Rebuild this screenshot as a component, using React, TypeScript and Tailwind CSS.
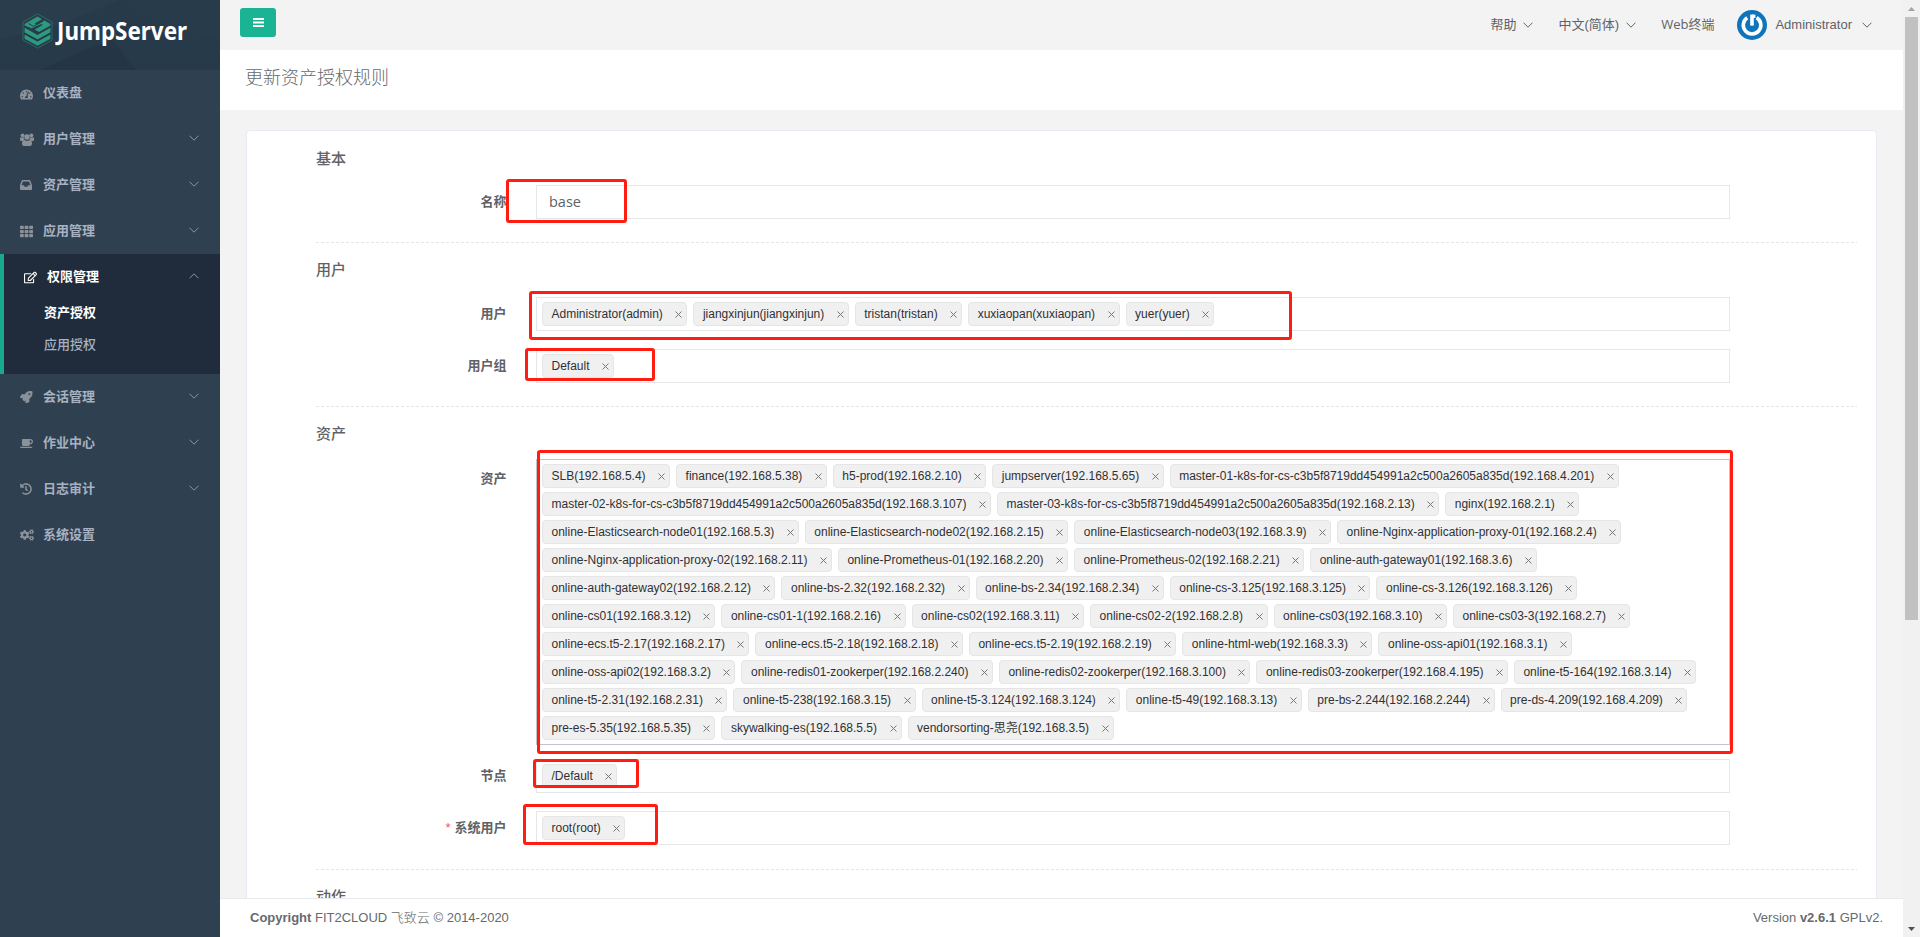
import type { ReactNode } from "react";
import { FaCoffee, FaCogs, FaHistory, FaRegEdit, FaRocket, FaTachometerAlt, FaTh } from "react-icons/fa";

const users = [
  "Administrator(admin)",
  "jiangxinjun(jiangxinjun)",
  "tristan(tristan)",
  "xuxiaopan(xuxiaopan)",
  "yuer(yuer)",
];

const assets = [
  "SLB(192.168.5.4)",
  "finance(192.168.5.38)",
  "h5-prod(192.168.2.10)",
  "jumpserver(192.168.5.65)",
  "master-01-k8s-for-cs-c3b5f8719dd454991a2c500a2605a835d(192.168.4.201)",
  "master-02-k8s-for-cs-c3b5f8719dd454991a2c500a2605a835d(192.168.3.107)",
  "master-03-k8s-for-cs-c3b5f8719dd454991a2c500a2605a835d(192.168.2.13)",
  "nginx(192.168.2.1)",
  "online-Elasticsearch-node01(192.168.5.3)",
  "online-Elasticsearch-node02(192.168.2.15)",
  "online-Elasticsearch-node03(192.168.3.9)",
  "online-Nginx-application-proxy-01(192.168.2.4)",
  "online-Nginx-application-proxy-02(192.168.2.11)",
  "online-Prometheus-01(192.168.2.20)",
  "online-Prometheus-02(192.168.2.21)",
  "online-auth-gateway01(192.168.3.6)",
  "online-auth-gateway02(192.168.2.12)",
  "online-bs-2.32(192.168.2.32)",
  "online-bs-2.34(192.168.2.34)",
  "online-cs-3.125(192.168.3.125)",
  "online-cs-3.126(192.168.3.126)",
  "online-cs01(192.168.3.12)",
  "online-cs01-1(192.168.2.16)",
  "online-cs02(192.168.3.11)",
  "online-cs02-2(192.168.2.8)",
  "online-cs03(192.168.3.10)",
  "online-cs03-3(192.168.2.7)",
  "online-ecs.t5-2.17(192.168.2.17)",
  "online-ecs.t5-2.18(192.168.2.18)",
  "online-ecs.t5-2.19(192.168.2.19)",
  "online-html-web(192.168.3.3)",
  "online-oss-api01(192.168.3.1)",
  "online-oss-api02(192.168.3.2)",
  "online-redis01-zookerper(192.168.2.240)",
  "online-redis02-zookerper(192.168.3.100)",
  "online-redis03-zookerper(192.168.4.195)",
  "online-t5-164(192.168.3.14)",
  "online-t5-2.31(192.168.2.31)",
  "online-t5-238(192.168.3.15)",
  "online-t5-3.124(192.168.3.124)",
  "online-t5-49(192.168.3.13)",
  "pre-bs-2.244(192.168.2.244)",
  "pre-ds-4.209(192.168.4.209)",
  "pre-es-5.35(192.168.5.35)",
  "skywalking-es(192.168.5.5)",
  "vendorsorting-思尧(192.168.3.5)",
];

function Chevron({ up = false, className = "" }: { up?: boolean; className?: string }) {
  return (
    <svg width="10" height="6" viewBox="0 0 10 6" fill="none" stroke="currentColor" className={className}>
      <path d={up ? "M0.5 5.3 5 0.8 9.5 5.3" : "M0.5 0.7 5 5.2 9.5 0.7"} strokeWidth="1" />
    </svg>
  );
}

function Logo() {
  return (
    <svg width="31" height="36" viewBox="0 0 31 36" fill="none" className="shrink-0">
      <path d="M15.5 0.8 30 9v18L15.5 35.2 1 27V9z" stroke="#2b6f6a" strokeWidth="0.9" />
      <g fill="#2c9a80">
        <path d="M2.6 11 15.5 3.6 20 6.2 12.6 10.6 14.4 11.7 22.6 7.6 28.4 11 28.4 12.6 17 18.9 12.6 16.4 20.2 12.2 18.6 11.3 9.8 15.3 2.6 12.6z" />
        <path d="M2.6 14.8 15.5 22 28.4 14.8v4.6L15.5 26.6 2.6 19.4z" />
        <path d="M2.6 21.4 15.5 28.6 28.4 21.4v4.4L15.5 32.8 2.6 25.8z" />
      </g>
      <path d="M6.6 10.6 11.4 13.4 20.6 8.4M11 16.6 20.4 11.4" stroke="#273a4a" strokeWidth="1" />
      <path d="M2.6 20.4 15.5 27.6 28.4 20.4" stroke="#273a4a" strokeWidth="1.3" />
    </svg>
  );
}

function GroupIcon() {
  return (
    <svg width="14" height="13" viewBox="0 0 14 13" fill="currentColor">
      <circle cx="2.6" cy="2.3" r="1.9" />
      <circle cx="11.4" cy="2.3" r="1.9" />
      <circle cx="7" cy="4" r="2.7" />
      <path d="M0 5.2q0-1 .9-1 1.6.5 2.9.1Q3.8 5.6 4.6 6.7 3.3 6.8 2.7 8H1.4Q0 8 0 6.8zM14 5.2q0-1-.9-1-1.6.5-2.9.1Q10.2 5.6 9.4 6.7 10.7 6.8 11.3 8H12.6Q14 8 14 6.8z" />
      <path d="M2 10.8Q2 7.2 4.3 7.1 7 8.7 9.7 7.1 12 7.2 12 10.8 12 13 9.9 13H4.1Q2 13 2 10.8z" />
    </svg>
  );
}

function InboxIcon() {
  return (
    <svg width="12" height="10" viewBox="0 0 12 10" fill="currentColor" fillRule="evenodd">
      <path d="M2.5 0h7q.6 0 .8.6L12 5.2V9.3q0 .7-.7.7H.7Q0 10 0 9.3V5.2L1.7.6Q1.9 0 2.5 0zM2.9 1.5 1.6 5.2H3.9L4.6 6.7H7.4L8.1 5.2H10.4L9.1 1.5z" />
    </svg>
  );
}

function Avatar() {
  return (
    <svg width="30" height="30" viewBox="0 0 30 30" fill="none" className="shrink-0">
      <circle cx="15" cy="15" r="15" fill="#0f75bb" />
      <path d="M10.2 7.8A8.8 8.8 0 1 0 19.6 7.6" stroke="#fff" strokeWidth="3.6" />
      <path d="M15 4.6v11" stroke="#fff" strokeWidth="3.6" />
      <path d="M15 6.3h3.4" stroke="#fff" strokeWidth="3.4" />
    </svg>
  );
}

function MenuItem({ icon, label, arrow = true }: { icon: ReactNode; label: string; arrow?: boolean }) {
  return (
    <div className="flex h-[46px] items-center pl-5 pr-[21px] text-[#a7b1c2]">
      <span className="flex w-[23px] text-[13px] text-[#8b9199]">{icon}</span>
      <span className="flex-1 text-[13px] font-bold leading-5">{label}</span>
      {arrow && <Chevron className="-mt-0.5 text-[#8a939f]" />}
    </div>
  );
}

function Sidebar() {
  return (
    <aside className="w-[220px] shrink-0 bg-[#2f4050]">
      <div className="relative h-[70px] overflow-hidden bg-[#273a4a]">
        <svg width="220" height="70" className="absolute inset-0">
          <path d="M0 0h120L60 25 0 40z" fill="#2a3d4c" />
          <path d="M112 40 136 70H40L90 48z" fill="#243645" />
          <path d="M130 0h90v40l-60-14z" fill="#283b4a" />
        </svg>
        <div className="relative flex pl-[21.5px] pt-[12.5px]">
          <Logo />
          <span className="-mt-px ml-[4.5px] block origin-left scale-x-[0.88] font-['Noto_Sans'] text-[25.5px] font-bold leading-[36px] text-white">
            JumpServer
          </span>
        </div>
      </div>
      <MenuItem icon={<FaTachometerAlt className="mt-0.5" />} label="仪表盘" arrow={false} />
      <MenuItem icon={<GroupIcon />} label="用户管理" />
      <MenuItem icon={<InboxIcon />} label="资产管理" />
      <MenuItem icon={<FaTh />} label="应用管理" />
      <div className="h-[120px] border-l-4 border-[#19aa8d] bg-[#202c3b]">
        <div className="flex h-[46px] items-center pl-5 pr-[21px] text-white">
          <span className="flex w-[23px] text-[13px]">
            <FaRegEdit />
          </span>
          <span className="flex-1 text-[13px] font-bold leading-5">权限管理</span>
          <Chevron up className="-mt-0.5 text-[#8a939f]" />
        </div>
        <div className="-mt-[3px] pl-10 text-[13px]">
          <div className="font-bold leading-8 text-white">资产授权</div>
          <div className="font-medium leading-8 text-[#a7b1c2]">应用授权</div>
        </div>
      </div>
      <MenuItem icon={<FaRocket className="text-[12.5px]" />} label="会话管理" />
      <MenuItem icon={<FaCoffee />} label="作业中心" />
      <MenuItem icon={<FaHistory className="text-[12px]" />} label="日志审计" />
      <MenuItem icon={<FaCogs className="text-[14px]" />} label="系统设置" arrow={false} />
    </aside>
  );
}

function TopBar() {
  return (
    <header className="flex h-[50px] shrink-0 pl-5 pr-[31px] text-[13px] text-[#5f6266]">
      <button className="mt-2 flex h-[29px] w-9 items-center justify-center rounded-[3px] bg-[#1ab394]">
        <svg width="11" height="9" viewBox="0 0 11 9" fill="#fff">
          <path d="M0 0h11v2H0zM0 3.5h11v2H0zM0 7h11v2H0z" />
        </svg>
      </button>
      <div className="ml-auto flex h-[50px] items-center">
        <span className="-mt-px">帮助</span>
        <Chevron className="ml-[7px] mr-[25px]" />
        <span className="-mt-px">中文(简体)</span>
        <Chevron className="ml-[7px] mr-[25px]" />
        <span className="mr-[23px]">
          <span className="font-['Open_Sans']">Web</span>终端
        </span>
        <Avatar />
        <span className="-mt-px ml-2 mr-[10px]">Administrator</span>
        <Chevron className="-mt-px" />
      </div>
    </header>
  );
}

function Tag({ children }: { children: string }) {
  return (
    <span className="flex h-6 items-center whitespace-nowrap rounded border border-[#e5e5e6] bg-[#f0f0f0] pl-[8.5px] pr-1 text-xs text-[#303133]">
      {children}
      <svg width="7" height="7" viewBox="0 0 7 7" stroke="#75787e" strokeWidth="1" className="ml-[12.5px] mt-px">
        <path d="M0.5 0.5 6.5 6.5M6.5 0.5 0.5 6.5" />
      </svg>
    </span>
  );
}

function Field({ label, required, children }: { label: string; required?: boolean; children: ReactNode }) {
  return (
    <div className="flex">
      <div className="w-[190.5px] shrink-0 text-right text-[13px] font-bold leading-[33px] text-[#606266]">
        {required && <span className="mr-1 font-normal text-[#ed5565]">*</span>}
        {label}
      </div>
      <div className="ml-[29.5px] w-[1194px]">{children}</div>
    </div>
  );
}

function TagBox({ items, active = false }: { items: string[]; active?: boolean }) {
  return (
    <div
      className={
        active
          ? "flex flex-wrap gap-x-1.5 gap-y-1 border border-[#c0c4cc] bg-white py-1 pl-[5px] pr-[25px]"
          : "flex flex-wrap gap-x-1.5 gap-y-1 border border-[#e5e6e7] bg-white py-1 pl-[5px] pr-[25px]"
      }
    >
      {items.map((item) => (
        <Tag key={item}>{item}</Tag>
      ))}
    </div>
  );
}

function SectionTitle({ children }: { children: string }) {
  return <h3 className="text-[15px] font-medium leading-5 text-[#606266]">{children}</h3>;
}

function Divider() {
  return (
    <svg width="1541" height="1" className="block">
      <path d="M0 0.5h1541" stroke="#e5e6e8" strokeDasharray="3 2" />
    </svg>
  );
}

function Form() {
  return (
    <section className="mx-[26px] mt-5 h-[780px] rounded-t-sm border border-[#e7eaf2] bg-white pl-[69px] pt-[18px]">
      <SectionTitle>基本</SectionTitle>
      <div className="mt-4">
        <Field label="名称">
          <div className="h-[34px] border border-[#e5e6e7] px-3 font-['Open_Sans'] text-[14.5px] leading-[31px] text-[#606266]">
            base
          </div>
        </Field>
      </div>
      <div className="mb-[17px] mt-[23px]">
        <Divider />
      </div>
      <SectionTitle>用户</SectionTitle>
      <div className="mt-[17px] flex flex-col gap-[18px]">
        <Field label="用户">
          <TagBox items={users} />
        </Field>
        <Field label="用户组">
          <TagBox items={["Default"]} />
        </Field>
      </div>
      <div className="mb-[17px] mt-[23px]">
        <Divider />
      </div>
      <SectionTitle>资产</SectionTitle>
      <div className="mt-[15px] flex flex-col">
        <div className="[&>div>div:first-child]:pt-[3px]">
          <Field label="资产">
            <TagBox items={assets} active />
          </Field>
        </div>
        <div className="mt-[14px]">
          <Field label="节点">
            <TagBox items={["/Default"]} />
          </Field>
        </div>
        <div className="mt-[18px]">
          <Field label="系统用户" required>
            <TagBox items={["root(root)"]} />
          </Field>
        </div>
      </div>
      <div className="mb-[17px] mt-6">
        <Divider />
      </div>
      <SectionTitle>动作</SectionTitle>
    </section>
  );
}

function Scrollbar() {
  return (
    <div className="flex w-[17px] shrink-0 flex-col items-center bg-[#f1f1f1]">
      <div className="flex h-[17px] items-center">
        <svg width="7" height="4">
          <path d="M0 4 3.5 0 7 4z" fill="#a3a3a3" />
        </svg>
      </div>
      <div className="h-[603px] w-[13px] bg-[#c1c1c1]" />
      <div className="mt-auto flex h-[17px] items-center">
        <svg width="7" height="4">
          <path d="M0 0 3.5 4 7 0z" fill="#505050" />
        </svg>
      </div>
    </div>
  );
}

const marks = [
  "left-[506px] top-[179px] h-[44px] w-[121px]",
  "left-[529px] top-[291px] h-[49px] w-[763px]",
  "left-[525px] top-[348px] h-[33px] w-[130px]",
  "left-[537px] top-[450px] h-[304px] w-[1196px]",
  "left-[533px] top-[759px] h-[29px] w-[106px]",
  "left-[523px] top-[804px] h-[41px] w-[135px]",
];

export default function App() {
  return (
    <div className="relative flex h-[937px] w-[1920px] overflow-hidden bg-[#f3f3f3] font-['Liberation_Sans','Noto_Sans_CJK_SC',sans-serif]">
      <Sidebar />
      <div className="flex min-w-0 flex-1 flex-col">
        <TopBar />
        <div className="h-[60px] shrink-0 bg-white pl-[25px] pt-[14px] text-[18px] font-light leading-7 text-[#676a6c]">
          更新资产授权规则
        </div>
        <main className="min-h-0 flex-1 overflow-hidden">
          <Form />
        </main>
        <footer className="flex h-[39px] shrink-0 justify-between border-t border-[#e7eaec] bg-white pl-[30px] pr-5 text-[13px] leading-[37px] text-[#676a6c]">
          <span>
            <b>Copyright</b> FIT2CLOUD <span className="font-light">飞致云</span> © 2014-2020
          </span>
          <span>
            Version <b>v2.6.1</b> GPLv2.
          </span>
        </footer>
      </div>
      <Scrollbar />
      {marks.map((place) => (
        <div key={place} className={`pointer-events-none absolute rounded-[3px] border-[3px] border-[#ff1d12] ${place}`} />
      ))}
    </div>
  );
}
